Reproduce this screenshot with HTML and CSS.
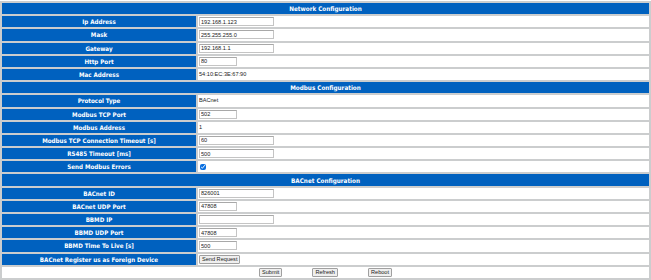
FILE: index.html
```html
<!DOCTYPE html>
<html lang="en">
<head>
    <meta charset="UTF-8">
    <title>Configuration</title>
    <link rel="stylesheet" href="styles.css">
</head>
<body>
<table class="config">
    <colgroup>
        <col class="col-label">
        <col class="col-value">
    </colgroup>
    <tr><th colspan="2" class="section">Network Configuration</th></tr>
    <tr>
        <td class="label">Ip Address</td>
        <td class="value"><input type="text" class="wide" value="192.168.1.123"></td>
    </tr>
    <tr>
        <td class="label">Mask</td>
        <td class="value"><input type="text" class="wide" value="255.255.255.0"></td>
    </tr>
    <tr>
        <td class="label">Gateway</td>
        <td class="value"><input type="text" class="wide" value="192.168.1.1"></td>
    </tr>
    <tr>
        <td class="label">Http Port</td>
        <td class="value"><input type="text" class="short" value="80"></td>
    </tr>
    <tr>
        <td class="label">Mac Address</td>
        <td class="value">54:10:EC:3E:67:90</td>
    </tr>

    <tr><th colspan="2" class="section">Modbus Configuration</th></tr>
    <tr>
        <td class="label">Protocol Type</td>
        <td class="value">BACnet</td>
    </tr>
    <tr>
        <td class="label">Modbus TCP Port</td>
        <td class="value"><input type="text" class="short" value="502"></td>
    </tr>
    <tr>
        <td class="label">Modbus Address</td>
        <td class="value">1</td>
    </tr>
    <tr>
        <td class="label">Modbus TCP Connection Timeout [s]</td>
        <td class="value"><input type="text" class="wide" value="60"></td>
    </tr>
    <tr>
        <td class="label">RS485 Timeout [ms]</td>
        <td class="value"><input type="text" class="wide" value="500"></td>
    </tr>
    <tr>
        <td class="label">Send Modbus Errors</td>
        <td class="value"><input type="checkbox" class="check" checked></td>
    </tr>

    <tr><th colspan="2" class="section">BACnet Configuration</th></tr>
    <tr>
        <td class="label">BACnet ID</td>
        <td class="value"><input type="text" class="wide" value="826001"></td>
    </tr>
    <tr>
        <td class="label">BACnet UDP Port</td>
        <td class="value"><input type="text" class="short" value="47808"></td>
    </tr>
    <tr>
        <td class="label">BBMD IP</td>
        <td class="value"><input type="text" class="wide" value=""></td>
    </tr>
    <tr>
        <td class="label">BBMD UDP Port</td>
        <td class="value"><input type="text" class="short" value="47808"></td>
    </tr>
    <tr>
        <td class="label">BBMD Time To Live [s]</td>
        <td class="value"><input type="text" class="short" value="500"></td>
    </tr>
    <tr>
        <td class="label">BACnet Register us as Foreign Device</td>
        <td class="value"><button type="button" class="btn">Send Request</button></td>
    </tr>

    <tr>
        <td colspan="2" class="actions">
            <div class="buttons">
                <button type="button" class="btn">Submit</button>
                <button type="button" class="btn">Refresh</button>
                <button type="button" class="btn">Reboot</button>
            </div>
        </td>
    </tr>
</table>
</body>
</html>
```

FILE: styles.css
```css
body {
    margin: 0;
    padding-top: 1px;
    background: #ffffff;
    font-family: "DejaVu Sans Condensed", "DejaVu Sans", Verdana, sans-serif;
}

.config {
    width: 651px;
    border-spacing: 2px;
    background: #cbcdce;
    table-layout: fixed;
}

.col-label {
    width: 194px;
}

.config td,
.config th {
    height: 11.2px;
    padding: 0;
    line-height: 11px;
}

.section {
    background: #0061bf;
    color: #ffffff;
    font-size: 6.3px;
    font-weight: bold;
    text-align: center;
}

.label {
    background: #0061bf;
    color: #ffffff;
    font-size: 6.2px;
    font-weight: bold;
    text-align: center;
}

.value {
    background: #ffffff;
    color: #222222;
    font-family: "Liberation Sans", Arial, sans-serif;
    font-size: 5.6px;
    padding-left: 1px !important;
}

input[type="text"] {
    box-sizing: border-box;
    height: 9px;
    margin: 0;
    padding: 0 1px;
    border: 1px solid #c4c4c4;
    border-top-color: #a8a8a8;
    font-family: "Liberation Sans", Arial, sans-serif;
    font-size: 5.6px;
    color: #222222;
    vertical-align: middle;
}

.wide {
    width: 75px;
}

.short {
    width: 38px;
}

.check {
    width: 6px;
    height: 6px;
    margin: 0 0 0 1px;
    accent-color: #0a6fe0;
    vertical-align: middle;
}

.btn {
    box-sizing: border-box;
    height: 9px;
    margin: 0;
    padding: 0 2px;
    border: 1px solid #a0a0a0;
    border-radius: 1px;
    background: #efefef;
    font-family: "Liberation Sans", Arial, sans-serif;
    font-size: 5.6px;
    line-height: 7px;
    color: #222222;
    vertical-align: middle;
}

.actions {
    background: #ffffff;
}

.buttons {
    display: flex;
    justify-content: center;
    gap: 30px;
}
```
